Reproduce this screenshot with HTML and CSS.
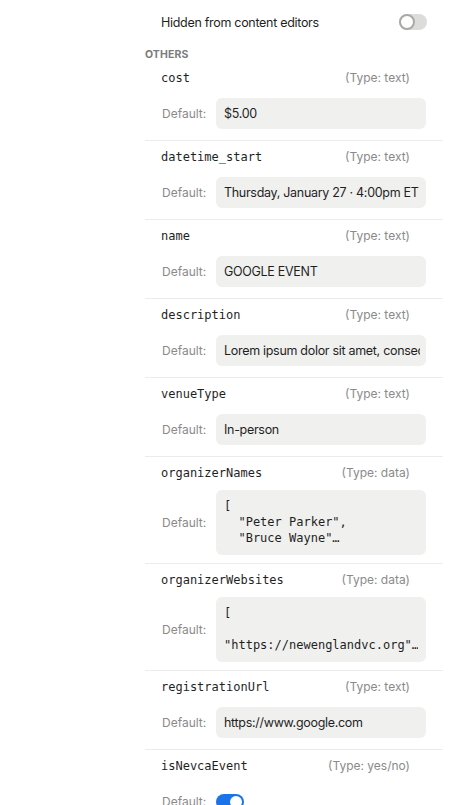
FILE: index.html
```html
<!DOCTYPE html>
<html>
<head>
<meta charset="utf-8">
<link rel="stylesheet" href="styles.css">
</head>
<body>
<div class="panel">
  <div class="toggle-row">
    <span class="toggle-label">Hidden from content editors</span>
    <span class="switch"><span class="knob"></span></span>
  </div>
  <div class="section-title">OTHERS</div>

  <div class="field">
    <div class="field-head"><span class="name">cost</span><span class="type">(Type: text)</span></div>
    <div class="field-body"><span class="def">Default:</span><div class="value"><span class="clip">$5.00</span></div></div>
  </div>
  <div class="field">
    <div class="field-head"><span class="name">datetime_start</span><span class="type">(Type: text)</span></div>
    <div class="field-body"><span class="def">Default:</span><div class="value"><span class="clip">Thursday, January 27 · 4:00pm ET</span></div></div>
  </div>
  <div class="field">
    <div class="field-head"><span class="name">name</span><span class="type">(Type: text)</span></div>
    <div class="field-body"><span class="def">Default:</span><div class="value"><span class="clip">GOOGLE EVENT</span></div></div>
  </div>
  <div class="field">
    <div class="field-head"><span class="name">description</span><span class="type">(Type: text)</span></div>
    <div class="field-body"><span class="def">Default:</span><div class="value"><span class="clip">Lorem ipsum dolor sit amet, consectetur adipiscing elit</span></div></div>
  </div>
  <div class="field">
    <div class="field-head"><span class="name">venueType</span><span class="type">(Type: text)</span></div>
    <div class="field-body"><span class="def">Default:</span><div class="value"><span class="clip">In-person</span></div></div>
  </div>
  <div class="field field-data">
    <div class="field-head"><span class="name">organizerNames</span><span class="type">(Type: data)</span></div>
    <div class="field-body"><span class="def">Default:</span><div class="value value-data"><div class="code-line">[</div><div class="code-line">  "Peter Parker",</div><div class="code-line">  "Bruce Wayne"…</div></div></div>
  </div>
  <div class="field field-data">
    <div class="field-head"><span class="name">organizerWebsites</span><span class="type">(Type: data)</span></div>
    <div class="field-body"><span class="def">Default:</span><div class="value value-data"><div class="code-line">[</div><div class="code-line"> </div><div class="code-line">"https://newenglandvc.org"…</div></div></div>
  </div>
  <div class="field">
    <div class="field-head"><span class="name">registrationUrl</span><span class="type">(Type: text)</span></div>
    <div class="field-body"><span class="def">Default:</span><div class="value"><span class="clip">https://www.google.com</span></div></div>
  </div>
  <div class="field field-last">
    <div class="field-head"><span class="name">isNevcaEvent</span><span class="type">(Type: yes/no)</span></div>
    <div class="field-body"><span class="def">Default:</span><span class="switch switch-on"><span class="knob"></span></span></div>
  </div>
</div>
</body>
</html>
```
FILE: styles.css
```css
html, body {
  margin: 0;
  padding: 0;
  background: #ffffff;
}
body {
  font-family: Inter, "Noto Sans", sans-serif;
  color: #1f1f1f;
  font-size: 13px;
  overflow: hidden;
}
.panel {
  margin-left: 145px;
  width: 298px;
}
.toggle-row {
  height: 42px;
  padding: 1px 16px 0 16px;
  display: flex;
  align-items: center;
  justify-content: space-between;
}
.toggle-label {
  font-size: 12.5px;
  letter-spacing: -0.3px;
  color: #1f1f1f;
}
.switch {
  position: relative;
  display: inline-block;
  width: 28px;
  height: 16px;
  border-radius: 8px;
  background: #dcdcda;
  flex: none;
}
.switch .knob {
  position: absolute;
  left: 0;
  top: 0;
  width: 12px;
  height: 12px;
  border-radius: 50%;
  background: #ffffff;
  border: 2px solid #a9a9a7;
}
.switch-on {
  background: #1a73e8;
}
.switch-on .knob {
  left: auto;
  right: 2px;
  top: 2px;
  border: none;
}
.section-title {
  margin-top: 5px;
  height: 14px;
  line-height: 14px;
  font-size: 10.5px;
  font-weight: 700;
  color: #7c7c7c;
  letter-spacing: 0.1px;
}
.field {
  padding: 8px 17px 11px 16px;
  border-bottom: 1px solid #ececec;
}
.field-data {
  padding-bottom: 8px;
}
.field-last {
  border-bottom: none;
}
.field-head {
  display: flex;
  justify-content: space-between;
  align-items: center;
  height: 16px;
  line-height: 16px;
  padding-right: 16px;
}
.name {
  font-family: "DejaVu Sans Mono", "Liberation Mono", monospace;
  font-size: 12px;
  color: #1f1f1f;
}
.type {
  font-size: 12px;
  color: #8a8a8a;
}
.field-body {
  display: flex;
  align-items: center;
  margin-top: 12px;
  min-height: 31px;
}
.field-data .field-body {
  margin-top: 9px;
}
.def {
  width: 55px;
  flex: none;
  font-size: 12px;
  color: #8a8a8a;
  padding-left: 1px;
  box-sizing: border-box;
}
.value {
  flex: 1;
  min-width: 0;
  height: 31px;
  display: flex;
  align-items: center;
  background: #f0f0ef;
  border-radius: 6px;
  padding: 0 6px 0 8px;
  font-size: 12.5px;
  letter-spacing: -0.3px;
  color: #1f1f1f;
}
.clip {
  display: block;
  overflow: hidden;
  white-space: nowrap;
  width: 100%;
}
.value-data {
  height: auto;
  display: block;
  padding: 8px 8px 9px 8px;
  font-family: "DejaVu Sans Mono", "Liberation Mono", monospace;
  font-size: 12px;
  letter-spacing: 0;
}
.code-line {
  height: 16px;
  line-height: 16px;
  white-space: pre;
  overflow: hidden;
}
```
